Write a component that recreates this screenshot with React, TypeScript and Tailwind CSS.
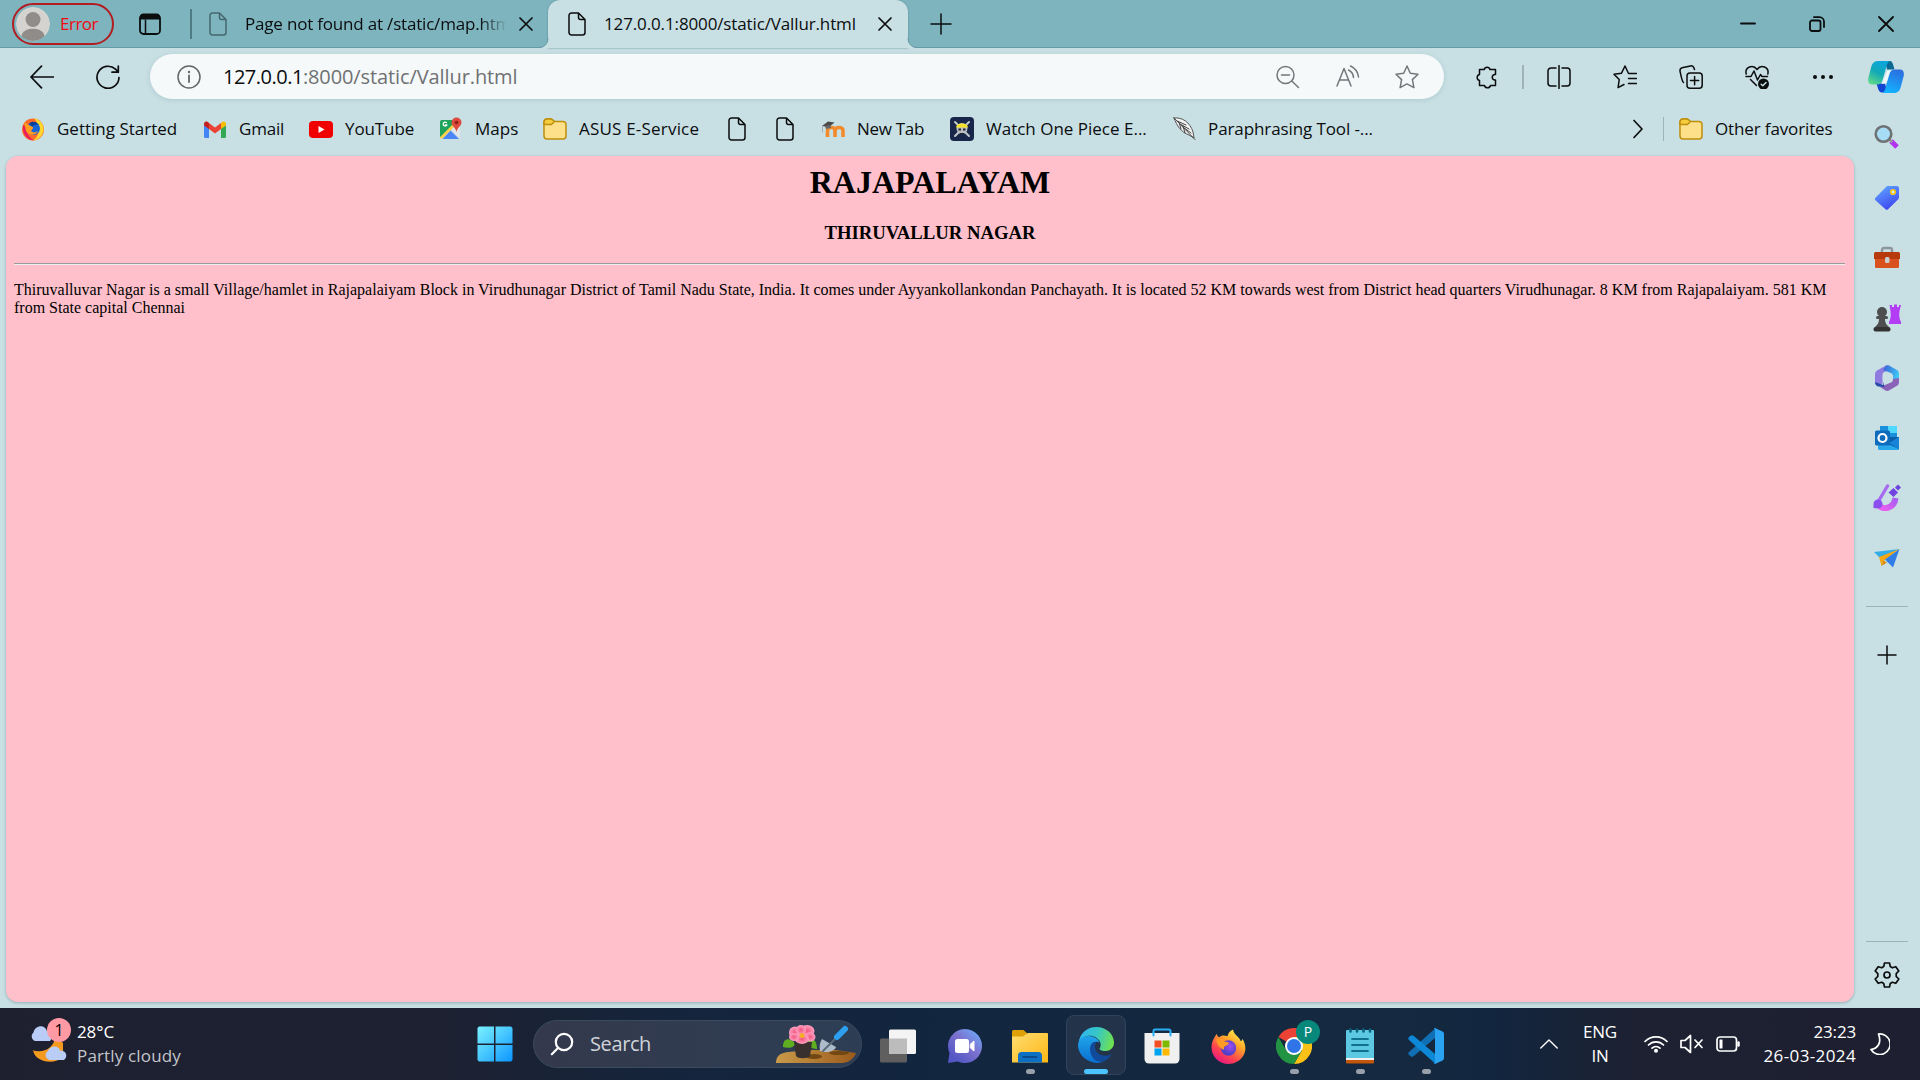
import React from "react";

type IconProps = { box: string; className: string; children: React.ReactNode };

function Icon({ box, className, children }: IconProps) {
  return (
    <svg
      viewBox={box}
      className={`block shrink-0 ${className}`}
      fill="none"
      stroke="currentColor"
      strokeWidth="1.5"
      strokeLinecap="round"
      strokeLinejoin="round"
    >
      {children}
    </svg>
  );
}

function FileIcon({ className = "" }: { className?: string }) {
  return (
    <Icon box="0 0 18 24" className={`h-6 w-[18px] ${className}`}>
      <path d="M1 3.5A2.5 2.5 0 0 1 3.500 1H10.500L17 7.500V20.500A2.500 2.500 0 0 1 14.500 23H3.500A2.500 2.500 0 0 1 1 20.500ZM10.500 1V5.500A2 2 0 0 0 12.500 7.500H17" />
    </Icon>
  );
}

function FolderIcon({ className = "" }: { className?: string }) {
  return (
    <Icon box="0 0 24 22" className={`h-[22px] w-6 ${className}`}>
      <path fill="#ffe08a" stroke="#bd8f0d" d="M1 4A3 3 0 0 1 4 1h4.500L11.500 3.500H20A3 3 0 0 1 23 6.500V18A3 3 0 0 1 20 21H4A3 3 0 0 1 1 18Z" />
      <path fill="#f5cd3c" stroke="#bd8f0d" d="M1 6.500V4A3 3 0 0 1 4 1h4.500L11.500 3.500 8.500 6.500Z" />
    </Icon>
  );
}

function Close({ className = "" }: { className?: string }) {
  return (
    <Icon box="0 0 16 16" className={`h-4 w-4 ${className}`}>
      <path d="M2 2 14 14M14 2 2 14" strokeWidth="1.7" />
    </Icon>
  );
}

function Firefox({ id, className }: { id: string; className: string }) {
  return (
    <Icon box="0 0 34 34" className={className}>
      <defs>
        <linearGradient id={`${id}a`} x1="0.85" y1="0.05" x2="0.25" y2="1">
          <stop offset="0" stopColor="#fff44f" />
          <stop offset="0.35" stopColor="#ffa529" />
          <stop offset="0.7" stopColor="#ff4350" />
          <stop offset="1" stopColor="#e31587" />
        </linearGradient>
        <radialGradient id={`${id}b`} cx="0.6" cy="0.4">
          <stop offset="0" stopColor="#a04df0" />
          <stop offset="1" stopColor="#5440c8" />
        </radialGradient>
      </defs>
      <path stroke="none" fill={`url(#${id}a)`} d="M4 7C5 5.500 5.500 4.500 5.500 4.500 6 6.500 7 7.500 8 8 10 6 13 6 16 7 16.500 4 19 1.500 21.500 0.500 21.500 3.500 23.500 5 26 7.500 27.500 9 28.500 10.500 29 12 30 11.500 30.500 10.500 30.500 9.500 34 15 34.500 21 31 26.500 28 31 23 34 17 34 8 34 0.500 27 0.500 18 0.500 13.500 2 10 4 7Z" />
      <circle cx="17" cy="18.500" r="7.500" stroke="none" fill={`url(#${id}b)`} />
      <path stroke="none" fill="#ff9a24" d="M5 10C9 8.500 12 9.500 13.500 12.500 15.500 12.500 17 13 17.500 14 16.500 15.500 14.500 16 13 17 12.500 18 13 19 12 20.500 9.500 18 6 17 5 10Z" />
    </Icon>
  );
}

const bookmarkText = "ml-3 whitespace-nowrap text-[17px] leading-6";

function Bookmarks() {
  return (
    <div className="flex h-12 items-center pl-[21px]">
      <div className="flex w-[182px] items-center">
        <Icon box="0 0 24 24" className="h-6 w-6">
          <circle cx="12" cy="12.500" r="11" stroke="none" fill="#ff6a2b" />
          <path stroke="none" fill="#ffd530" d="M13 1C20 3 23.500 8 22.500 14 21 20 17 23 12 23.500 19 19 20 10 13 1Z" />
          <path stroke="none" fill="#e8205c" d="M2 8C1 17 6 23 13 23.500 8 20 5 16 6 11Z" />
          <circle cx="12.500" cy="11.500" r="6.500" stroke="none" fill="#1565d8" />
          <path stroke="none" fill="#0b3e94" d="M8 6.500C11 4 15 4 18 8 15 7 12 8 11.500 10Z" />
          <path stroke="none" fill="#ff9b1f" d="M3 5 7.500 8 12 10C12.500 12 10.500 12.500 10 14 12 16 15 15.500 17 14 15 19 7.500 19 5 14Z" />
        </Icon>
        <span className={bookmarkText}>Getting Started</span>
      </div>
      <div className="flex w-[106px] items-center">
        <Icon box="0 0 24 24" className="h-6 w-6">
          <path stroke="none" fill="#4285f4" d="M1 6V19.500A1.500 1.500 0 0 0 2.500 21H6V9Z" />
          <path stroke="none" fill="#34a853" d="M23 6V19.500A1.500 1.500 0 0 1 21.500 21H18V9Z" />
          <path stroke="none" fill="#ea4335" d="M6 6 12 10.500 18 6V12L12 16.500 6 12Z" />
          <path stroke="none" fill="#c5221f" d="M1 7C1 4.500 3.500 3.500 6 6V12L1 8.500Z" />
          <path stroke="none" fill="#fbbc04" d="M23 7C23 4.500 20.500 3.500 18 6V12L23 8.500Z" />
        </Icon>
        <span className={`${bookmarkText} tracking-[-0.2px]`}>Gmail</span>
      </div>
      <div className="flex w-[130px] items-center">
        <Icon box="0 0 24 24" className="h-6 w-6">
          <rect x="0" y="4" width="24" height="17" rx="4" fill="#f00000" stroke="none" />
          <path d="M9.500 9V16L15.500 12.500Z" fill="#fff" stroke="none" />
        </Icon>
        <span className={`${bookmarkText} tracking-[-0.1px]`}>YouTube</span>
      </div>
      <div className="flex w-[104px] items-center">
        <Icon box="0 0 24 24" className="h-6 w-6">
          <path stroke="none" fill="#1fa25a" d="M3 3H20L3 21A2 2 0 0 1 1 19V5A2 2 0 0 1 3 3Z" />
          <path stroke="none" fill="#dfe5e8" d="M12 12.500 21 21.500V5Z" />
          <path stroke="none" fill="#4a86f5" d="M11.500 13.500 20 22H3.500Z" />
          <path stroke="#fcd04b" strokeWidth="2.500" d="M2.500 20.500 17 6" />
          <path stroke="#fff" strokeWidth="1.300" d="M7.500 5.500A2 2 0 1 0 8 8H6.500" />
          <path stroke="none" fill="#dd4b3e" d="M17.500 0.500A5 5 0 0 1 22.500 5.500C22.500 9 18.500 10 17.500 15 16.500 10 12.500 9 12.500 5.500A5 5 0 0 1 17.500 0.500Z" />
          <circle cx="17.500" cy="5.500" r="1.800" stroke="none" fill="#8c1f17" />
        </Icon>
        <span className={bookmarkText}>Maps</span>
      </div>
      <div className="flex w-[182px] items-center">
        <FolderIcon />
        <span className={`${bookmarkText} tracking-[0.2px]`}>ASUS E-Service</span>
      </div>
      <FileIcon className="ml-[3px]" />
      <FileIcon className="ml-[30px]" />
      <div className="ml-[27px] flex w-[129px] items-center">
        <Icon box="0 0 24 24" className="h-6 w-6">
          <path stroke="#f28a2b" strokeWidth="3.600" strokeLinecap="butt" d="M6.500 20V12.500M6.500 13.500C7 9.500 14 9.500 14 13.500V20M14 13.500C14.500 9.500 22 9.500 22 13.500V20" />
          <path stroke="none" fill="#4a4a4a" d="M1 9 7 4.500 13.500 5.500 8 10Z" />
          <path stroke="none" fill="#686868" d="M4 9 10 8V11L5 12Z" />
          <path stroke="#999" strokeWidth="0.700" d="M1.500 9V15" />
        </Icon>
        <span className={`${bookmarkText} tracking-[-0.3px]`}>New Tab</span>
      </div>
      <div className="flex w-[222px] items-center">
        <Icon box="0 0 24 24" className="h-6 w-6">
          <rect width="24" height="24" rx="4" fill="#18264a" stroke="none" />
          <path stroke="#c4c8cc" strokeWidth="2" d="M5 5 19 19M19 5 5 19" />
          <circle cx="12" cy="11.500" r="5.500" fill="#b9bcc0" stroke="none" />
          <path fill="#f3e12e" stroke="none" d="M6 10.500C6.500 5 17.500 5 18 10.500Z" />
          <path fill="#22242c" stroke="none" d="M8.500 11.500h2.500v2h-2.500zM13 11.500h2.500v2H13zM10 16h4v1.200h-4z" />
        </Icon>
        <span className={bookmarkText}>Watch One Piece E...</span>
      </div>
      <div className="flex items-center">
        <Icon box="0 0 24 24" className="h-6 w-6">
          <path stroke="#555" strokeWidth="1" fill="#f2f2f2" d="M2 1C10 0 18 5 21 15L22 21 17 18C9 15 5 9 2 1Z" />
          <path stroke="#444" strokeWidth="1" d="M2 1 23 22.500M5 4 14 8M8 7 17 12M11 10 19 16M7 5 9 12M11 9 13 16" />
        </Icon>
        <span className={`${bookmarkText} tracking-[-0.1px]`}>Paraphrasing Tool -...</span>
      </div>
      <div className="ml-auto flex items-center">
        <Icon box="0 0 12 20" className="h-5 w-3">
          <path d="M2 1.500 10 10 2 18.500" strokeWidth="1.700" />
        </Icon>
        <div className="ml-[19px] h-6 w-px bg-[#9db3b8]" />
        <FolderIcon className="ml-[15px]" />
        <span className={`${bookmarkText} mr-[21px] w-[118px] tracking-[-0.130px]`}>Other favorites</span>
      </div>
    </div>
  );
}

function TabStrip() {
  return (
    <div className="flex h-12 shrink-0 items-center border-b border-[#649ba5] bg-[#7eb4be] pl-3">
      <div className="flex h-[42px] w-[102px] shrink-0 items-center rounded-full border-2 border-[#b11d20] pl-[2px]">
        <Icon box="0 0 34 34" className="h-[34px] w-[34px] rounded-full">
          <circle cx="17" cy="17" r="17" fill="#d5d3d0" stroke="none" />
          <circle cx="17" cy="12.500" r="7.500" fill="#908c89" stroke="none" />
          <path d="M5.500 29.500C5.500 19 28.500 19 28.500 29.500A17 17 0 0 1 5.500 29.500Z" fill="#908c89" stroke="none" />
        </Icon>
        <span className="ml-[10px] text-[17px] leading-6 tracking-[-0.5px] text-[#f00a0f]">Error</span>
      </div>
      <Icon box="0 0 22 22" className="ml-[25px] h-[22px] w-[22px]">
        <rect x="1" y="1.500" width="20" height="19.500" rx="3.500" strokeWidth="1.800" />
        <path d="M1 6.500V5A4 4 0 0 1 5 1H17A4 4 0 0 1 21 5V6.500Z" fill="currentColor" stroke="none" />
        <path d="M6.500 7V20.500" />
      </Icon>
      <div className="ml-[29px] h-[30px] w-[2px] bg-[#4f7b84]" />
      <FileIcon className="ml-[17px] text-[#45676e]" />
      <span className="ml-[18px] w-[262px] overflow-hidden whitespace-nowrap text-[17px] leading-6 tracking-[-0.19px] [mask-image:linear-gradient(to_right,black_235px,transparent_262px)]">
        Page not found at /static/map.html
      </span>
      <Close className="ml-[11px]" />
      <div className="relative ml-[14px] flex h-12 w-[360px] items-center rounded-t-[12px] bg-[#c8dfe3] pl-5 shadow-[0_0_2px_#4f868f]">
        <svg className="absolute -left-[9px] bottom-0 h-[10px] w-[10px]" viewBox="0 0 10 10">
          <path d="M0 10A9 9 0 0 0 9 0H10V10Z" fill="#c8dfe3" />
          <path d="M0 9.500A9 9 0 0 0 9 0" fill="none" stroke="#649ba5" />
        </svg>
        <svg className="absolute -right-[9px] bottom-0 h-[10px] w-[10px]" viewBox="0 0 10 10">
          <path d="M10 10A9 9 0 0 1 1 0H0V10Z" fill="#c8dfe3" />
          <path d="M10 9.500A9 9 0 0 1 1 0" fill="none" stroke="#649ba5" />
        </svg>
        <FileIcon />
        <span className="ml-[18px] w-[252px] whitespace-nowrap text-[17px] leading-6 tracking-[-0.13px]">
          127.0.0.1:8000/static/Vallur.html
        </span>
        <Close className="ml-[21px]" />
      </div>
      <Icon box="0 0 22 22" className="ml-[22px] h-[22px] w-[22px]">
        <path d="M11 1V21M1 11H21" />
      </Icon>
      <div className="ml-auto flex items-center gap-[53px] pr-[26px]">
        <Icon box="0 0 16 16" className="h-4 w-4">
          <path d="M1 7.500H15" strokeWidth="1.800" />
        </Icon>
        <Icon box="0 0 16 16" className="h-4 w-4">
          <rect x="1" y="4.500" width="10.500" height="10.500" rx="2" strokeWidth="1.800" />
          <path d="M5 1.200H10.500A4.500 4.500 0 0 1 15 5.700V11" strokeWidth="1.800" />
        </Icon>
        <Icon box="0 0 16 16" className="h-4 w-4">
          <path d="M1 1 15 15M15 1 1 15" strokeWidth="1.800" />
        </Icon>
      </div>
    </div>
  );
}

function Toolbar() {
  return (
    <div className="flex h-[57px] shrink-0 items-center pl-[30px]">
      <Icon box="0 0 24 24" className="h-6 w-6">
        <path d="M23.500 12H1M11.500 1.200 1 12 11.500 22.800" strokeWidth="1.700" />
      </Icon>
      <Icon box="0 0 24 24" className="ml-[42px] h-6 w-6">
        <path d="M23 12.500A11 11 0 1 1 19.500 4.200L22.300 7M22.300 1V7.200H16" strokeWidth="1.700" />
      </Icon>
      <div className="ml-[30px] flex h-[45px] w-[1294px] items-center rounded-full bg-[#f5f9fa] pl-[27px] shadow-[0_1px_5px_#aecbd1]">
        <Icon box="0 0 24 24" className="h-6 w-6 text-[#666]">
          <circle cx="12" cy="12" r="11" />
          <path d="M12 10.500V17" strokeWidth="1.800" />
          <circle cx="12" cy="7" r="1.200" fill="currentColor" stroke="none" />
        </Icon>
        <span className="ml-[22px] text-[20px] leading-7 tracking-[-0.500px]">127.0.0.1</span>
        <span className="text-[20px] leading-7 tracking-[-0.1px] text-[#6f7173]">:8000/static/Vallur.html</span>
        <div className="ml-auto flex items-center text-[#74777a]">
          <Icon box="0 0 24 24" className="h-6 w-6">
            <circle cx="9.500" cy="10" r="8.500" />
            <path d="M15.800 16 22.500 22.500M5.500 10H13.500" />
          </Icon>
          <Icon box="0 0 24 24" className="ml-9 h-6 w-6">
            <path d="M1 21 8 3.500 15 21M3.500 15H12.500M12.500 5A9 9 0 0 1 17.500 12.500M14.500 1A14 14 0 0 1 22.500 12" />
          </Icon>
          <Icon box="0 0 24 24" className="ml-[35px] mr-[25px] h-6 w-6">
            <path d="M12 1 15.300 8.200 23 9.200 17.400 14.600 18.900 22.600 12 18.900 5.100 22.600 6.600 14.600 1 9.200 8.700 8.200Z" />
          </Icon>
        </div>
      </div>
      <Icon box="0 0 24 24" className="ml-[31px] h-6 w-6">
        <path d="M4.500 4.500H9.200A3 3 0 0 1 15 4.500H20.500V9.500H19.500A2.800 2.800 0 0 0 19.500 15H20.500V20.500H15.500A3.100 3.100 0 0 1 9.500 20.500H4.500V15.500A3.100 3.100 0 0 1 4.500 9.500Z" />
      </Icon>
      <div className="ml-[23px] h-6 w-[2px] bg-[#9db3b8]" />
      <Icon box="0 0 24 24" className="ml-[23px] h-6 w-6">
        <path d="M12 0.500V23.500M9 3H4A3 3 0 0 0 1 6V18A3 3 0 0 0 4 21H9M15 3H20A3 3 0 0 1 23 6V18A3 3 0 0 1 20 21H15" />
      </Icon>
      <Icon box="0 0 24 24" className="ml-[42px] h-6 w-6">
        <path d="M22.500 8.500H15.500L12 1 8.500 8.200 1 9.200 6.200 14.600 5.100 22.600 11 19.500M15.500 13.500H23.500M15.500 18.500H23.500M18 8.500H23.500" />
      </Icon>
      <Icon box="0 0 24 24" className="ml-[42px] h-6 w-6">
        <rect x="8" y="8" width="15.200" height="15.200" rx="3" />
        <path d="M15.600 11.500V19.700M11.500 15.600H19.700M4.500 17.500C3 16.500 1.800 10 1 6 0.700 4 1.500 3.200 3 2.800L11.500 0.900C13.500 0.500 14.500 1.500 15 3L15.500 4.500" />
      </Icon>
      <Icon box="0 0 24 24" className="ml-[42px] h-6 w-6">
        <path d="M1.200 9C-0.500 2 8 -1 12 4.500 16 -1 24.500 2 22.800 9M1 11.500H6L9 6 12.500 15 15.500 9.500 17 11.500H22.500M5.500 14.500 11.500 20.500" />
        <circle cx="18.500" cy="19" r="5.500" fill="currentColor" stroke="none" />
        <path d="M16.200 19.200 17.800 20.800 21 17.500" stroke="#c8dfe3" />
      </Icon>
      <Icon box="0 0 24 24" className="ml-[42px] h-6 w-6">
        <g fill="currentColor" stroke="none">
          <circle cx="4" cy="12" r="2" />
          <circle cx="12" cy="12" r="2" />
          <circle cx="20" cy="12" r="2" />
        </g>
      </Icon>
      <Icon box="0 0 36 32" className="ml-[33px] h-8 w-9">
        <defs>
          <linearGradient id="cpA" x1="0.700" y1="0" x2="0.200" y2="1">
            <stop offset="0" stopColor="#0aa6e0" />
            <stop offset="0.500" stopColor="#12a9b5" />
            <stop offset="1" stopColor="#5fd98a" />
          </linearGradient>
          <linearGradient id="cpB" x1="0.700" y1="0" x2="0.300" y2="1">
            <stop offset="0" stopColor="#2b6fe0" />
            <stop offset="1" stopColor="#12b4ff" />
          </linearGradient>
        </defs>
        <path stroke="none" fill="#0b6a94" d="M17 0H22C25 0.500 25.500 5 26.500 8.500H19Z" />
        <path stroke="none" fill="#1246d2" d="M8.500 22.500H17L19.500 31.500H14C10 31.500 10 26 8.500 22.500Z" />
        <path stroke="none" fill="url(#cpA)" d="M10 0H22C19 1 18.500 5 17.500 9L14.500 19C13.500 23 11 23.500 8 23.500H4C0.500 23.500-0.300 20.500 0.300 17L3.500 5C4.500 1.500 7 0 10 0Z" />
        <path stroke="none" fill="url(#cpB)" d="M26 32H14C17 31 17.500 27 18.500 23L21.500 13C22.500 9 25 8.500 28 8.500H32C35.500 8.500 36.300 11.500 35.700 15L32.500 27C31.500 30.500 29 32 26 32Z" />
        <path stroke="none" fill="#eef8fb" d="M19.500 9.500H23.500C22 10.500 21.500 12 21 13.500L18.800 20.500C18 22.500 16.500 23 13.500 22.800 15 21.500 15.500 19 16 17.500Z" />
      </Icon>
    </div>
  );
}

const cell = "flex h-[60px] w-full items-center justify-center";

function Sidebar() {
  return (
    <aside className="flex w-[66px] shrink-0 flex-col items-center pt-[2px]">
      <div className={cell}>
        <Icon box="0 0 26 26" className="h-[26px] w-[26px]">
          <path d="M17 17 23 23" stroke="#b232f2" strokeWidth="5" strokeLinecap="butt" />
          <path d="M14.500 14.500 17.500 17.500" stroke="#999" strokeWidth="2.500" />
          <circle cx="9.500" cy="10" r="7.800" fill="#a6dcf5" stroke="#6f7273" strokeWidth="2.600" />
        </Icon>
      </div>
      <div className={`${cell} mt-px`}>
        <Icon box="0 0 26 26" className="h-[26px] w-[26px]">
          <defs>
            <linearGradient id="tag" x1="0.200" y1="0" x2="0.700" y2="1">
              <stop offset="0" stopColor="#5fa5ff" />
              <stop offset="1" stopColor="#3d41f0" />
            </linearGradient>
          </defs>
          <path stroke="none" fill="url(#tag)" d="M14 1H22.500A2.500 2.500 0 0 1 25 3.500V12C25 13 24.500 14 24 14.500L14 24.300A2 2 0 0 1 11.500 24.300L1.700 15.500A2 2 0 0 1 1.700 12.500L12 2C12.500 1.400 13 1 14 1Z" />
          <circle cx="19" cy="7" r="2.200" fill="#e2ebff" stroke="#f2c81b" strokeWidth="1.800" />
        </Icon>
      </div>
      <div className={cell}>
        <Icon box="0 0 28 26" className="h-[26px] w-7">
          <path d="M9 8V5A2 2 0 0 1 11 3H17A2 2 0 0 1 19 5V8" stroke="#8d979b" strokeWidth="2.400" />
          <rect x="2" y="12" width="24" height="11" rx="1.500" fill="#d9521d" stroke="none" />
          <path d="M1 8.500A1.500 1.500 0 0 1 2.500 7H25.500A1.500 1.500 0 0 1 27 8.500V14H1Z" fill="#b73a0f" stroke="none" />
          <rect x="12" y="12" width="4.500" height="6" rx="1.500" fill="#c9ced1" stroke="none" />
        </Icon>
      </div>
      <div className={cell}>
        <Icon box="0 0 28 28" className="h-7 w-7">
          <path stroke="none" fill="#b33cf5" d="M16.500 1H19V3H21V0.500H24V3H26V1H28L26.500 7C26 11 26 14 28 18V20H16V18C18 14 18 11 17.500 7Z" />
          <g fill="#4e4e50" stroke="none">
            <circle cx="9" cy="8" r="5" />
            <rect x="3" y="12" width="12" height="3" rx="1.500" />
            <path d="M6 14H12C12 19 13 20 16 23H2C5 20 6 19 6 14Z" />
            <rect x="0.500" y="23" width="17" height="4.500" rx="2" fill="#333" />
          </g>
        </Icon>
      </div>
      <div className={cell}>
        <Icon box="0 0 26 26" className="h-[26px] w-[26px]">
          <defs>
            <linearGradient id="m3" x1="0" y1="0" x2="1" y2="0.500">
              <stop offset="0" stopColor="#3a5cd6" />
              <stop offset="1" stopColor="#3fc8f4" />
            </linearGradient>
          </defs>
          <path stroke="none" fill="#8f7be0" d="M12 0.500 3 5.500C1.500 6.500 1 8 1 9.500V17C1 18.500 2 20 3.500 20.500L8.500 19V10C8.500 8.500 9 7.500 10.500 7L15 5Z" />
          <path stroke="none" fill="url(#m3)" d="M12 0.500C13 0 14 0 15 0.500L23 5C24.500 6 25 7.500 25 9V18L19 14.500V11C19 9.500 18 8.500 17 8L9 5Z" />
          <path stroke="none" fill="#8a63b8" d="M25 13V17C25 18.500 24.500 20 23 20.800L15 25.500C14 26 12.500 26 11.500 25.500L6 22 17 17.500C18.500 17 19 15.500 19 14Z" />
          <path stroke="none" fill="#2748a8" d="M1 17C1 19 2 20.500 4 21.500L10.500 22 9 17V20Z" />
          <path stroke="none" fill="#c8dfe3" d="M10 9H16L18 13 16 17H10L8.500 13Z" />
        </Icon>
      </div>
      <div className={cell}>
        <Icon box="0 0 26 26" className="h-[26px] w-[26px]">
          <path fill="#1a90dc" stroke="none" d="M6 1H23V14H6Z" />
          <path fill="#50d9ff" stroke="none" d="M14 1H23V8H14Z" />
          <path fill="#0d5ea9" stroke="none" d="M4 12H25V24H5Z" />
          <path fill="#28a8ea" stroke="none" d="M4 14.500 25 24A1 1 0 0 1 24 25H5.500A1.500 1.500 0 0 1 4 23.500Z" />
          <path fill="#1784d9" stroke="none" d="M25 12V24L15 18Z" />
          <rect x="1" y="5.500" width="15" height="15" rx="1.500" fill="#0f6cbd" stroke="none" />
          <circle cx="8.500" cy="13" r="4" stroke="#fff" strokeWidth="2.200" />
        </Icon>
      </div>
      <div className={cell}>
        <Icon box="0 0 28 28" className="h-7 w-7">
          <defs>
            <linearGradient id="ds" x1="1" y1="0.200" x2="0.200" y2="0.800">
              <stop offset="0" stopColor="#a95ff2" />
              <stop offset="1" stopColor="#e45ff0" />
            </linearGradient>
          </defs>
          <path d="M5 20C9 27 21 25 22.500 14" stroke="url(#ds)" strokeWidth="6" strokeLinecap="butt" />
          <path d="M5 18 14.500 2" stroke="#a66bf0" strokeWidth="3.400" />
          <path d="M0.500 24V20A4.500 4.500 0 1 1 5 24.500Z" fill="#8b4ff0" stroke="none" />
          <path d="M20.500 4 25 8.500 20.500 13 15.500 8.500Z" fill="#7144e2" stroke="none" />
          <path d="M25 0.500 28 3.500 25 6.500 22 3.500Z" fill="#6a45dd" stroke="none" />
        </Icon>
      </div>
      <div className={cell}>
        <Icon box="0 0 26 20" className="h-5 w-[26px]">
          <path fill="#35aee8" stroke="none" d="M0 4 25.500 1 6 10Z" />
          <path fill="#f3a712" stroke="none" d="M5 9 25.500 1 9 13.500 7.500 18Z" />
          <path fill="#d98a0b" stroke="none" d="M9.500 12.500 13 14.500 7.500 18Z" />
          <path fill="#2f7fe6" stroke="none" d="M11 11.500 25.500 1 19 19.500Z" />
        </Icon>
      </div>
      <div className="mt-[18px] h-px w-[42px] bg-[#9db3b8]" />
      <Icon box="0 0 20 20" className="mt-[38px] h-5 w-5">
        <path d="M10 1V19M1 10H19" />
      </Icon>
      <div className="mt-auto h-px w-[42px] bg-[#9db3b8]" />
      <Icon box="0 0 26 26" className="mb-5 mt-5 h-[26px] w-[26px]">
        <path d="M10.500 1H15.500L16.300 4.600 18.300 5.800 21.800 4.700 24.800 9 22.200 11.600V14.400L24.800 17 21.800 21.300 18.300 20.200 16.300 21.400 15.500 25H10.500L9.700 21.400 7.700 20.200 4.200 21.300 1.200 17 3.800 14.400V11.600L1.200 9 4.200 4.700 7.700 5.800 9.700 4.600Z" strokeWidth="1.700" />
        <circle cx="13" cy="13" r="3" strokeWidth="1.700" />
      </Icon>
    </aside>
  );
}

function WebPage() {
  return (
    <main className="mb-[6px] ml-[6px] mt-[3px] flex-1 rounded-[12px] bg-[#ffc0cb] px-2 font-['Liberation_Serif',serif] text-black shadow-[0_1px_3px_#8fb0b6]">
      <h1 className="pt-[8px] text-center text-[32px] font-bold leading-[37px]">RAJAPALAYAM</h1>
      <h3 className="mt-[21px] text-center text-[18.72px] font-bold leading-[22px]">THIRUVALLUR NAGAR</h3>
      <div className="mr-px mt-[19px] h-[2px] border-b border-t border-b-[#eeeeee] border-t-[#9a9a9a]" />
      <p className="mt-4 text-[16px] leading-[18px]">
        Thiruvalluvar Nagar is a small Village/hamlet in Rajapalaiyam Block in Virudhunagar District of Tamil Nadu State,
        India. It comes under Ayyankollankondan Panchayath. It is located 52 KM towards west from District head quarters
        Virudhunagar. 8 KM from Rajapalaiyam. 581 KM from State capital Chennai
      </p>
    </main>
  );
}

function AppTile({ indicator, children }: { indicator?: boolean; children: React.ReactNode }) {
  return (
    <div className="flex h-[72px] w-[66px] flex-col items-center pt-[18px]">
      <div className="flex h-10 items-center">{children}</div>
      {indicator && <div className="mt-[3px] h-[5px] w-[9px] rounded-full bg-[#98a0ab]" />}
    </div>
  );
}

function Taskbar() {
  return (
    <footer className="flex h-[72px] shrink-0 items-center bg-[linear-gradient(to_right,#1e2030_0px,#1d2131_430px,#14253d_700px,#12263f_980px,#152940_1400px,#12263f_1490px,#1d2131_1640px,#1e1f30_1920px)] text-white">
      <div className="flex w-[477px] items-center pl-[30px]">
        <div className="relative h-[46px] w-[42px]">
          <Icon box="0 0 42 46" className="h-[46px] w-[42px]">
            <path d="M2 29C12 33 24 28 25.500 15L33 22V36C25 44 5 42 3 29Z" fill="#f39a1f" stroke="none" />
            <path d="M5 20A5 5 0 0 1 3.500 11.500C5 4 15 3 17 10 22 10 23 17 20 20Z" fill="#b9cdf7" stroke="none" />
            <path d="M19 39A5 5 0 0 1 18 30C20 24 29 24 30 29.500 37 29.500 38 36 34 39Z" fill="#b9cdf7" stroke="none" />
          </Icon>
          <span className="absolute left-[17px] top-[-3px] flex h-6 w-6 items-center justify-center rounded-full bg-[#ff9aa5] text-[16px] leading-none text-black">
            1
          </span>
        </div>
        <div className="ml-[5px] text-[17px] leading-6">
          <p className="tracking-[-0.1px]">28°C</p>
          <p className="tracking-[0.160px] text-[#c3c6cb]">Partly cloudy</p>
        </div>
      </div>
      <Icon box="0 0 36 36" className="h-9 w-9">
        <defs>
          <linearGradient id="win" gradientUnits="userSpaceOnUse" x1="0" y1="0" x2="36" y2="36">
            <stop offset="0" stopColor="#7df2ff" />
            <stop offset="0.500" stopColor="#46c6ff" />
            <stop offset="1" stopColor="#0a94ff" />
          </linearGradient>
        </defs>
        <path stroke="none" fill="url(#win)" d="M2 0.500H17V17.500H0.500V2ZM18.500 0.500H34L35.500 2V17.500H18.500ZM0.500 19H17V35.500H2L0.500 34ZM18.500 19H35.500V34L34 35.500H18.500Z" />
      </Icon>
      <div className="ml-[20px] flex h-12 w-[329px] items-center rounded-full border border-[#3a4a5d] bg-[linear-gradient(to_right,#34394c,#2d3e54)] pl-4">
        <Icon box="0 0 24 24" className="h-6 w-6">
          <circle cx="14" cy="10" r="8.200" strokeWidth="2.200" />
          <path d="M8 16 1.800 22.200" strokeWidth="2.200" />
        </Icon>
        <span className="ml-[16px] text-[20px] leading-7 tracking-[-0.390px] text-[#d0d4da]">Search</span>
        <Icon box="0 0 80 38" className="ml-auto mr-[5px] h-[38px] w-20">
          <defs>
            <linearGradient id="soil" x1="0" y1="0" x2="1" y2="0">
              <stop offset="0" stopColor="#c99a4a" />
              <stop offset="1" stopColor="#9a5b1c" />
            </linearGradient>
            <radialGradient id="petal">
              <stop offset="0" stopColor="#f2567c" />
              <stop offset="1" stopColor="#ffa0c4" />
            </radialGradient>
          </defs>
          <path d="M0 38C0 31 4 28 12 27L34 25 60 25 80 28C78 34 72 38 66 38Z" fill="url(#soil)" stroke="none" />
          <ellipse cx="38" cy="31.500" rx="8" ry="2.500" fill="#734714" stroke="none" />
          <ellipse cx="63" cy="28" rx="10" ry="2" fill="#734714" stroke="none" />
          <path d="M18 17C10 11 7 16 7 22 14 24 19 22 20 17ZM32 15C38 12 41 17 41 24 35 24 32 21 32 15Z" fill="#5fae21" stroke="none" />
          <path d="M18 17H36L34 31C31 34 22 34 20 31Z" fill="#38302f" stroke="none" />
          <g fill="url(#petal)" stroke="none">
            <ellipse cx="19" cy="7.500" rx="6" ry="6" />
            <ellipse cx="31" cy="6" rx="7.500" ry="6" />
            <ellipse cx="34" cy="12" rx="5.500" ry="4.500" />
            <ellipse cx="26" cy="14" rx="7" ry="5" />
            <ellipse cx="18" cy="12" rx="5" ry="4" />
            <ellipse cx="25" cy="5" rx="5" ry="5" />
          </g>
          <circle cx="26" cy="10.500" r="2.500" fill="#f5ac2a" stroke="none" />
          <path d="M46 14 60 22C58 27 50 28 44 26 43 21 44 17 46 14Z" fill="#aebcc9" stroke="none" />
          <path d="M47 26 60 13" stroke="#596b7a" strokeWidth="2" />
          <path d="M61 12 69 4" stroke="#2c9ff0" strokeWidth="6" />
        </Icon>
      </div>
      <div className="ml-[3px] flex">
        <AppTile>
          <Icon box="0 0 36 34" className="-ml-px h-[34px] w-9">
            <rect x="0" y="9.500" width="27" height="24" rx="1.500" fill="#605f60" stroke="none" />
            <rect x="9" y="0.500" width="27" height="24.500" rx="1.500" fill="#f4f4f4" stroke="none" />
            <path d="M9 9.500H27V25H9Z" fill="#bcbcbc" stroke="none" />
          </Icon>
        </AppTile>
        <AppTile>
          <Icon box="0 0 36 36" className="ml-px h-9 w-9">
            <defs>
              <linearGradient id="chat" x1="0.900" y1="0.100" x2="0.200" y2="0.900">
                <stop offset="0" stopColor="#6ea5f5" />
                <stop offset="0.450" stopColor="#7d72cf" />
                <stop offset="1" stopColor="#5356c4" />
              </linearGradient>
            </defs>
            <path stroke="none" fill="url(#chat)" d="M18 1A17 17 0 1 1 11 33.500L1 35 2.500 25A17 17 0 0 1 18 1Z" />
            <rect x="8" y="11" width="14" height="14" rx="2.500" fill="#fff" stroke="none" />
            <path d="M23.500 16 27 13V23L23.500 20Z" fill="#fff" stroke="#fff" strokeWidth="1" />
          </Icon>
        </AppTile>
        <AppTile indicator>
          <Icon box="0 0 36 34" className="h-[34px] w-9">
            <defs>
              <linearGradient id="fold" x1="0" y1="0" x2="1" y2="1">
                <stop offset="0" stopColor="#ffdc73" />
                <stop offset="1" stopColor="#fdb813" />
              </linearGradient>
            </defs>
            <path d="M0 9V2.500A1.500 1.500 0 0 1 1.500 1H11.500L16 5V9Z" fill="#e0a008" stroke="none" />
            <path d="M0 7.500H11L16 4H35A1 1 0 0 1 36 5V33.500H0Z" fill="url(#fold)" stroke="none" />
            <path d="M6 33.500V26A3.500 3.500 0 0 1 9.500 23H26.500A3.500 3.500 0 0 1 30 26V33.500Z" fill="#0c70c4" stroke="none" />
            <path d="M11 28H24.500" stroke="#083f78" />
          </Icon>
        </AppTile>
        <div className="relative flex h-[72px] w-[66px] flex-col items-center pt-[7px]">
          <div className="flex h-[60px] w-[60px] flex-col items-center rounded-lg border border-[#31435a] bg-[#23344a] pt-[11px]">
            <Icon box="0 0 36 36" className="h-9 w-9">
              <defs>
                <linearGradient id="edA" x1="0" y1="0.300" x2="1" y2="0.500">
                  <stop offset="0" stopColor="#2fb5f0" />
                  <stop offset="0.500" stopColor="#36c6c6" />
                  <stop offset="1" stopColor="#6fe24e" />
                </linearGradient>
                <linearGradient id="edB" x1="0.500" y1="0" x2="0.500" y2="1">
                  <stop offset="0" stopColor="#1fa4ea" />
                  <stop offset="1" stopColor="#0a6ed0" />
                </linearGradient>
              </defs>
              <path stroke="none" fill="url(#edA)" d="M0.500 16C2 6 9 0 18.500 0 28 0 36 7 36 15.500 36 21 32 24 27.500 24 23 24 21.500 22.500 21.500 21.500 23.500 19 23.500 14 18 10.500 12 7 4 9 0.500 16Z" />
              <path stroke="none" fill="url(#edB)" d="M0 18C0.500 12 5 9 10.500 9 16 9 20.500 12 21.500 15.500 15 13 12 18 13 23 14.500 30 20 34 25.500 34.500 22 36.500 15 36.500 10 33.500 3.500 30 0 24 0 18Z" />
              <path stroke="none" fill="#114a9a" d="M13.500 17C10 22 13 31 19 34 26 36.500 31 32 33.500 27 29 30 23 29 20 26 16.500 23 16 18.500 18.500 15.500 16.500 15 14.500 15.500 13.500 17Z" />
            </Icon>
            <div className="mt-[6px] h-[5px] w-6 rounded-full bg-[#4cc2ff]" />
          </div>
        </div>
        <AppTile>
          <Icon box="0 0 36 36" className="h-9 w-9">
            <path d="M9.500 6V3A1.500 1.500 0 0 1 11 1.500H25A1.500 1.500 0 0 1 26.500 3V6" stroke="#2aaef5" strokeWidth="2" />
            <path d="M0.500 5H35.500V31A4.500 4.500 0 0 1 31 35.500H5A4.500 4.500 0 0 1 0.500 31Z" fill="#f0f0f0" stroke="none" />
            <g stroke="none">
              <path fill="#f25022" d="M10.500 12.500H17.500V19.500H10.500Z" />
              <path fill="#7fba00" d="M18.500 12.500H25.500V19.500H18.500Z" />
              <path fill="#00a4ef" d="M10.500 20.500H17.500V27.500H10.500Z" />
              <path fill="#ffb900" d="M18.500 20.500H25.500V27.500H18.500Z" />
            </g>
            <path d="M9.500 5V7.500M26.500 5V7.500" stroke="#2aaef5" strokeWidth="2" />
          </Icon>
        </AppTile>
        <AppTile>
          <Firefox id="ffx" className="h-[35px] w-[35px]" />
        </AppTile>
        <AppTile indicator>
          <div className="relative">
            <Icon box="0 0 36 36" className="h-9 w-9">
              <path stroke="none" fill="#ea4335" d="M18 18 2.400 9A18 18 0 0 1 33.600 9H18Z" />
              <path stroke="none" fill="#fbc116" d="M18 9H33.600A18 18 0 0 1 18 36L25.800 22.500Z" />
              <path stroke="none" fill="#229342" d="M2.400 9A18 18 0 0 0 18 36L25.800 22.500 10.200 22.500Z" />
              <circle cx="18" cy="18" r="9" fill="#fff" stroke="none" />
              <circle cx="18" cy="18" r="7" fill="#2f75e8" stroke="none" />
            </Icon>
            <span className="absolute left-[20px] top-[-8px] flex h-6 w-6 items-center justify-center rounded-full bg-[#07887a] text-[14px] leading-none">
              P
            </span>
          </div>
        </AppTile>
        <AppTile indicator>
          <Icon box="0 0 28 36" className="h-9 w-7">
            <rect x="0" y="30" width="28" height="5.500" rx="1" fill="#c2570c" stroke="none" />
            <rect x="0" y="28" width="28" height="4" fill="#f2f2f2" stroke="none" />
            <path d="M0 3A1 1 0 0 1 1 2H27A1 1 0 0 1 28 3V30H0Z" fill="#5cc8e2" stroke="none" />
            <path d="M4.500 1.500V3.500M11 1.500V3.500M17.500 1.500V3.500M24 1.500V3.500" stroke="#0b617e" strokeWidth="2.600" />
            <path d="M6 11H22M6 17H22M6 23H22" stroke="#10718f" strokeWidth="1.800" />
          </Icon>
        </AppTile>
        <AppTile indicator>
          <Icon box="0 0 36 36" className="h-9 w-9">
            <path stroke="none" fill="#1070b3" d="M27 0.500 1 24C0 25 0 26 1 27L3 28.500C4 29 4.500 29 5.500 28.200L27 10Z" />
            <path stroke="none" fill="#0c88d6" d="M27 35.500 1 12C0 11 0 10 1 9L3 7.500C4 7 4.500 7 5.500 7.800L27 26Z" />
            <path stroke="none" fill="#29a3f2" d="M26 0.500C26.500 0 27 0 28 0.400L34.500 3.500C35.500 4 36 5 36 6V30C36 31 35.500 32 34.500 32.500L28 35.600C27 36 26.500 36 26 35.500 27 35 27 34 27 33V3C27 2 27 1 26 0.500Z" />
          </Icon>
        </AppTile>
      </div>
      <div className="ml-auto flex items-center pr-[30px] text-[17px] leading-6">
        <Icon box="0 0 18 10" className="h-[10px] w-[18px]">
          <path d="M0.800 9 9 1 17.200 9" strokeWidth="1.400" />
        </Icon>
        <div className="ml-[24px] w-[36px] text-center tracking-[-0.2px]">
          <p>ENG</p>
          <p>IN</p>
        </div>
        <Icon box="0 0 24 18" className="ml-[26px] h-[18px] w-6">
          <path d="M1 6.500A15.500 15.500 0 0 1 23 6.500M4.500 10A10.500 10.500 0 0 1 19.500 10M8 13.200A6 6 0 0 1 16 13.200" strokeWidth="1.700" />
          <circle cx="12" cy="15.800" r="2" fill="currentColor" stroke="none" />
        </Icon>
        <Icon box="0 0 24 20" className="ml-[12px] h-5 w-6">
          <path d="M1 6.500H5L10.500 1.500V18.500L5 13.500H1ZM15 6 22 13.500M22 6 15 13.500" strokeWidth="1.700" />
        </Icon>
        <Icon box="0 0 24 18" className="ml-[12px] h-[18px] w-6">
          <rect x="1" y="2" width="19.500" height="14" rx="3" strokeWidth="1.700" />
          <path d="M22.500 7.500V10.500" strokeWidth="2.500" />
          <rect x="3.500" y="4.500" width="3" height="9" rx="0.500" fill="currentColor" stroke="none" />
        </Icon>
        <div className="ml-[20px] w-[96px] text-right">
          <p className="tracking-[-0.170px]">23:23</p>
          <p className="tracking-[0.380px]">26-03-2024</p>
        </div>
        <Icon box="0 0 20 22" className="ml-[14px] h-[22px] w-5">
          <path d="M8.500 1A10.300 10.300 0 1 1 1 16.500C7.500 15.500 12 10 8.500 1Z" strokeWidth="1.700" />
        </Icon>
      </div>
    </footer>
  );
}

export default function App() {
  return (
    <div className="flex h-[1080px] w-[1920px] flex-col overflow-hidden bg-[#c8dfe3] font-['Open_Sans',sans-serif] text-[#0b0d0e]">
      <TabStrip />
      <Toolbar />
      <div className="flex min-h-0 flex-1">
        <div className="flex min-w-0 flex-1 flex-col">
          <Bookmarks />
          <WebPage />
        </div>
        <Sidebar />
      </div>
      <Taskbar />
    </div>
  );
}
